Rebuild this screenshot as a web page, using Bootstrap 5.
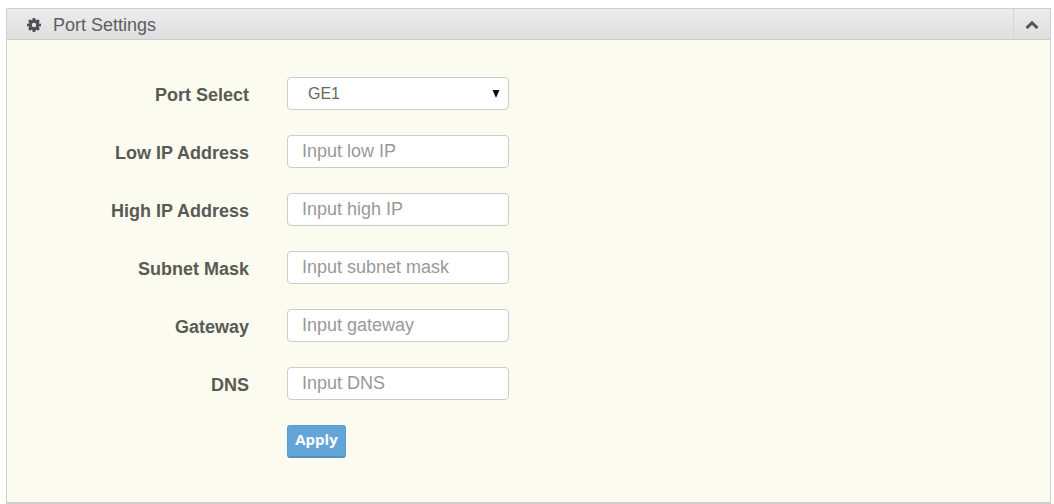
<!DOCTYPE html>
<html lang="en">
<head>
<meta charset="utf-8">
<meta name="viewport" content="width=device-width, initial-scale=1">
<title>Port Settings</title>
<link rel="stylesheet" href="https://cdn.jsdelivr.net/npm/bootstrap@5.3.0/dist/css/bootstrap.min.css">
<style>
  body { background: #fff; font-family: "Liberation Sans", Arial, sans-serif; font-size: 18px; color: #555; }
  .page { padding: 8px 3px 0 6px; }
  .panel { border: 1px solid #cfcfcf; border-bottom-width: 2px; background: #fcfbf0; }
  .panel-head { height: 31px; background: linear-gradient(#ececec, #dfdfdf); border-bottom: 1px solid #cbcbcb; color: #5c5e62; }
  .panel-title { font-size: 18px; line-height: 30px; padding: 2px 0 0 20px; gap: 12px; }
  .toggle { width: 37px; border: 0; border-left: 1px solid #d6d6d6; background: transparent; color: #55565a; }
  .settings { padding: 37px 0 44px; display: grid; gap: 25px; }
  .field-row { display: grid; grid-template-columns: 242px 222px; column-gap: 38px; align-items: center; }
  .field-row label { text-align: right; font-weight: 700; padding-top: 4px; line-height: 29px; color: #5a5a54; }
  .field-row .form-control, .field-row .form-select { height: 33px; padding: 0 14px; font-size: 18px; line-height: 24px; border: 1px solid #ccc; border-radius: 4px; color: #666; background-color: #fff; }
  .field-row .form-select { padding: 0 20px; font-size: 16px; background-image: url("data:image/svg+xml,%3Csvg xmlns='http://www.w3.org/2000/svg' viewBox='0 0 8 8'%3E%3Cpath fill='%23111' d='M.5 0h7L4 8z'/%3E%3C/svg%3E"); background-size: 8px 8px; background-position: right 8px center; }
  .form-control::placeholder { color: #999; opacity: 1; }
  .apply { grid-column: 2; justify-self: start; height: 33px; width: 59px; padding: 0 0 4px; border: 1px solid #5c9aca; border-radius: 3px; border-bottom: 2px solid #5790bd; background: #64a5d8; color: #fff; font: 700 15px/26px "Open Sans", sans-serif; }
  .apply:hover { background: #5598cc; color: #fff; }
</style>
</head>
<body>
<main class="page">
  <section class="panel">
    <header class="panel-head d-flex justify-content-between">
      <h1 class="panel-title d-flex align-items-center fw-normal m-0">
        <svg width="14" height="14" viewBox="0 0 14 14" aria-hidden="true"><g fill="#4d5057"><path id="tooth" d="M5.7 0h2.6l.5 3H5.2zM5.7 14h2.6l.5-3H5.2z"/><use href="#tooth" transform="rotate(45 7 7)"/><use href="#tooth" transform="rotate(90 7 7)"/><use href="#tooth" transform="rotate(135 7 7)"/></g><circle cx="7" cy="7" r="3.7" fill="none" stroke="#4d5057" stroke-width="3"/></svg>
        <span>Port Settings</span>
      </h1>
      <button class="toggle d-flex align-items-center justify-content-center p-0" type="button" data-bs-toggle="collapse" data-bs-target="#portForm" aria-expanded="true" aria-controls="portForm" aria-label="Collapse panel">
        <svg width="14" height="10" viewBox="0 0 14 10" aria-hidden="true"><path d="M1.5 9 7 3.8 12.5 9" fill="none" stroke="currentColor" stroke-width="3"/></svg>
      </button>
    </header>
    <div class="collapse show" id="portForm">
      <form class="settings">
        <div class="field-row"><label for="port">Port Select</label><select class="form-select" id="port"><option>GE1</option></select></div>
        <div class="field-row"><label for="low">Low IP Address</label><input class="form-control" id="low" type="text" placeholder="Input low IP"></div>
        <div class="field-row"><label for="high">High IP Address</label><input class="form-control" id="high" type="text" placeholder="Input high IP"></div>
        <div class="field-row"><label for="mask">Subnet Mask</label><input class="form-control" id="mask" type="text" placeholder="Input subnet mask"></div>
        <div class="field-row"><label for="gateway">Gateway</label><input class="form-control" id="gateway" type="text" placeholder="Input gateway"></div>
        <div class="field-row"><label for="dns">DNS</label><input class="form-control" id="dns" type="text" placeholder="Input DNS"></div>
        <div class="field-row"><button class="btn apply" type="button">Apply</button></div>
      </form>
    </div>
  </section>
</main>
<script src="https://cdn.jsdelivr.net/npm/bootstrap@5.3.0/dist/js/bootstrap.bundle.min.js"></script>
</body>
</html>
